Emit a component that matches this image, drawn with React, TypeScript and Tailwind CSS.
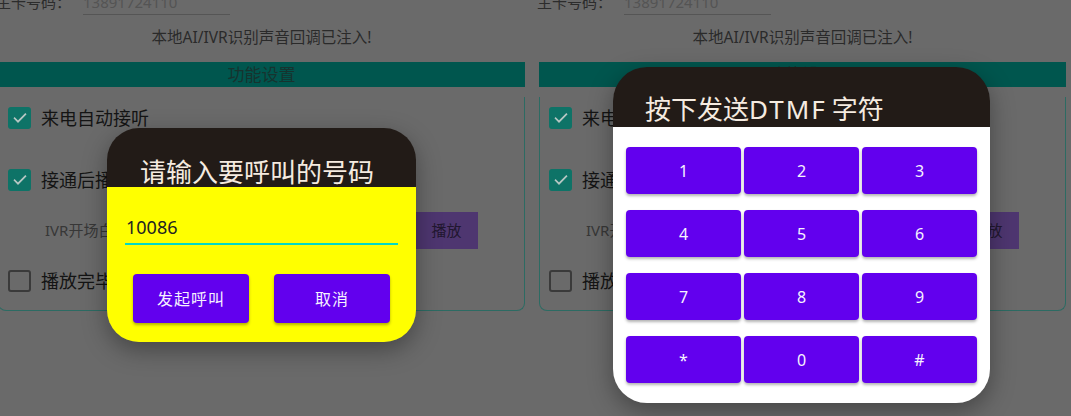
import React from 'react';

const FONT = "font-['Noto_Sans','Noto_Sans_CJK_SC',sans-serif]";

const Check = ({ checked }: { checked: boolean }) =>
  checked ? (
    <span className="w-[23px] h-[22px] rounded-[3px] bg-[#0e7367] flex items-center justify-center shrink-0">
      <svg width="16" height="16" viewBox="0 0 24 24" fill="none">
        <path d="M4 12.5l5 5L20 6.5" stroke="#b7c7c4" strokeWidth="2.6" strokeLinecap="square" />
      </svg>
    </span>
  ) : (
    <span className="w-[23px] h-[22px] rounded-[3px] border-2 border-[#3a3a3a] shrink-0" />
  );

const Panel = ({ className = '' }: { className?: string }) => (
  <div className={`w-[541px] shrink-0 ${className}`}>
    {/* top row, partly scrolled off */}
    <div className="-mt-[11px] h-[26px] flex items-stretch text-[15px] leading-[20px]">
      <span className="w-[89px] pl-[2px] flex items-center text-[#2c2c2c]">主卡号码：</span>
      <span className="w-[147px] flex items-center border-b border-[#555] text-[#545454]">13891724110</span>
    </div>
    <div className="ml-[4px] w-[527px] mt-[12px] text-center text-[15.5px] leading-[20px] text-[#2a2a2a]">
      本地AI/IVR识别声音回调已注入!
    </div>
    <div className="ml-[4px] w-[527px] mt-[15px]">
      <div className="h-[25px] bg-[#00564e] flex items-center justify-center text-[17px] text-[#17332f]">功能设置</div>
      <div className="border-x border-b border-[#2c6b63] rounded-b-[8px] pb-[8px]">
        <div className="mt-[10px] h-[42px] flex items-center gap-[10px] pl-[9px]">
          <Check checked />
          <span className="text-[18px] text-[#141414]">来电自动接听</span>
        </div>
        <div className="mt-[20px] h-[42px] flex items-center gap-[10px] pl-[9px]">
          <Check checked />
          <span className="text-[18px] text-[#141414]">接通后播放IVR开场白</span>
        </div>
        <div className="mt-[11px] h-[37px] flex items-center pl-[46px] pr-[46px]">
          <span className="flex-1 text-[15px] text-[#373737]">IVR开场白音频文件</span>
          <span className="w-[63px] h-full bg-[#4e3670] flex items-center justify-center text-[15px] text-[#21172f]">播放</span>
        </div>
        <div className="mt-[11px] h-[42px] flex items-center gap-[10px] pl-[9px]">
          <Check checked={false} />
          <span className="text-[18px] text-[#141414]">播放完毕后自动挂断</span>
        </div>
      </div>
    </div>
  </div>
);

const Btn = ({ label, className = '' }: { label: string; className?: string }) => (
  <div
    className={`bg-[#6200ee] rounded-[4px] shadow-[0_2px_3px_rgba(0,0,0,0.3)] flex items-center justify-center text-[#f6f2ff] text-[16px] ${className}`}
  >
    {label}
  </div>
);

const keys = ['1', '2', '3', '4', '5', '6', '7', '8', '9', '*', '0', '#'];

export default function App() {
  return (
    <div className={`relative w-[1071px] h-[416px] overflow-hidden bg-[#6a6a6a] ${FONT}`}>
      <div className="flex -ml-[6px]">
        <Panel />
        <Panel />
      </div>

      {/* call dialog */}
      <div className="absolute left-[107px] top-[128px] w-[309px] rounded-[32px] overflow-hidden shadow-[0_8px_24px_rgba(0,0,0,0.35)]">
        <div className="h-[59px] bg-[#221b17] pl-[33px] pt-[29px] text-[26px] leading-[30px] text-[#f5ebe0]">
          请输入要呼叫的号码
        </div>
        <div className="bg-[#ffff00] h-[155px] pt-[28px]">
          <div className="mx-[18px] border-b-2 border-[#03dac5] text-[18px] leading-[24px] text-[#222] pl-[1px] pb-[4px]">
            10086
          </div>
          <div className="mt-[29px] px-[26px] flex justify-between">
            <Btn label="发起呼叫" className="w-[116px] h-[49px] tracking-[1px]" />
            <Btn label="取消" className="w-[116px] h-[49px] tracking-[1px]" />
          </div>
        </div>
      </div>

      {/* DTMF dialog */}
      <div className="absolute left-[613px] top-[67px] w-[377px] rounded-[34px] overflow-hidden shadow-[0_8px_24px_rgba(0,0,0,0.35)]">
        <div className="h-[60px] bg-[#221b17] pl-[32px] pt-[27px] text-[26px] leading-[30px] text-[#f5ebe0]">
          按下发送<span className="tracking-[2px] mr-[5px]">DTMF</span>字符
        </div>
        <div className="bg-white h-[276px] px-[13px] pt-[20px] grid grid-cols-3 gap-x-[3px] gap-y-[16px] content-start">
          {keys.map(k => (
            <Btn key={k} label={k} className="h-[47px]" />
          ))}
        </div>
      </div>
    </div>
  );
}
